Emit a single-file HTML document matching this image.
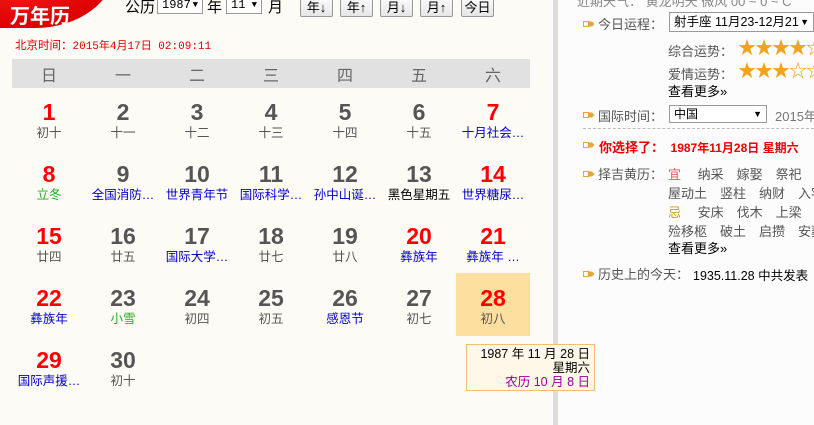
<!DOCTYPE html>
<html><head><meta charset="utf-8">
<style>
*{margin:0;padding:0;box-sizing:border-box}
body{width:814px;height:425px;overflow:hidden;background:#fdfbf6;font-family:"Liberation Sans","Noto Sans CJK SC",sans-serif;position:relative}
.abs{position:absolute;white-space:nowrap}
#logo{position:absolute;left:-40px;top:-60px;width:155px;height:88px;border-radius:0 0 80px 40px/0 0 60px 40px;background:radial-gradient(ellipse at 40% 40%,#f22 0%,#d00 70%,#b00 100%)}
.logot{position:absolute;color:#fff;font-size:20px;font-weight:bold;font-family:"Noto Sans CJK SC",sans-serif}
.sel{position:absolute;height:17px;border:1px solid #999;background:#fff;font-size:12px;font-family:"Liberation Mono",monospace;padding-left:4px;line-height:15px}
.sel b{position:absolute;right:4px;top:0;font-size:9px}
.btn{position:absolute;top:-3px;height:20px;border:1px solid #999;background:linear-gradient(#fbfbfb,#e6e6e6);font-size:13px;text-align:center;line-height:19px;border-radius:2px}
.hdr{position:absolute;left:12px;top:59px;width:518px;height:29px;background:#e1e1e1}
.hdr span{position:absolute;top:3px;width:74px;text-align:center;font-size:16px;color:#666}
.c{position:absolute;width:74px;text-align:center}
.n{font-size:23px;font-weight:bold;color:#555;line-height:26px;font-family:"Liberation Sans",sans-serif}
.r{color:#f00}
.l{font-size:12.5px;color:#555;line-height:16px;margin-top:0px}
.b{color:#00c}.g{color:#2a2}.k{color:#000}
#div{position:absolute;left:553px;top:0;width:5px;height:425px;background:#ddd}
#right{position:absolute;left:558px;top:0;width:256px;height:425px;background:#fcfcfc}
.ic{position:absolute;width:12px;height:8px}
.t{font-size:13px;color:#555}
.star{color:#f3a21b;font-size:18px;letter-spacing:-1px}
</style></head><body>
<div id="logo"><div class="logot" style="left:50px;top:60px">万年历</div></div>

<div class="abs" style="left:125px;top:-4px;font-size:15px">公历</div>
<div class="sel" style="left:157px;top:-3px;width:46px">1987<b>▼</b></div>
<div class="abs" style="left:207px;top:-4px;font-size:15px">年</div>
<div class="sel" style="left:226px;top:-3px;width:36px">11<b>▼</b></div>
<div class="abs" style="left:268px;top:-4px;font-size:15px">月</div>
<div class="btn" style="left:300px;width:33px">年↓</div>
<div class="btn" style="left:340px;width:33px">年↑</div>
<div class="btn" style="left:380px;width:33px">月↓</div>
<div class="btn" style="left:420px;width:33px">月↑</div>
<div class="btn" style="left:461px;width:33px">今日</div>

<div class="abs" style="left:15px;top:37px;font-size:11.5px;color:#d00">北京时间：<span style="font-family:'Liberation Mono',monospace;font-size:11px">2015年4月17日 02:09:11</span></div>

<div class="hdr">
<span style="left:0">日</span><span style="left:74px">一</span><span style="left:148px">二</span><span style="left:222px">三</span><span style="left:296px">四</span><span style="left:370px">五</span><span style="left:444px">六</span>
</div>

<div style="position:absolute;left:456px;top:273px;width:74px;height:63px;background:#fde0a0"></div>

<div class="c" style="left:12px;top:99px"><div class="n r">1</div><div class="l">初十</div></div>
<div class="c" style="left:86px;top:99px"><div class="n">2</div><div class="l">十一</div></div>
<div class="c" style="left:160px;top:99px"><div class="n">3</div><div class="l">十二</div></div>
<div class="c" style="left:234px;top:99px"><div class="n">4</div><div class="l">十三</div></div>
<div class="c" style="left:308px;top:99px"><div class="n">5</div><div class="l">十四</div></div>
<div class="c" style="left:382px;top:99px"><div class="n">6</div><div class="l">十五</div></div>
<div class="c" style="left:456px;top:99px"><div class="n r">7</div><div class="l b">十月社会…</div></div>
<div class="c" style="left:12px;top:161px"><div class="n r">8</div><div class="l g">立冬</div></div>
<div class="c" style="left:86px;top:161px"><div class="n">9</div><div class="l b">全国消防…</div></div>
<div class="c" style="left:160px;top:161px"><div class="n">10</div><div class="l b">世界青年节</div></div>
<div class="c" style="left:234px;top:161px"><div class="n">11</div><div class="l b">国际科学…</div></div>
<div class="c" style="left:308px;top:161px"><div class="n">12</div><div class="l b">孙中山诞…</div></div>
<div class="c" style="left:382px;top:161px"><div class="n">13</div><div class="l k">黑色星期五</div></div>
<div class="c" style="left:456px;top:161px"><div class="n r">14</div><div class="l b">世界糖尿…</div></div>
<div class="c" style="left:12px;top:223px"><div class="n r">15</div><div class="l">廿四</div></div>
<div class="c" style="left:86px;top:223px"><div class="n">16</div><div class="l">廿五</div></div>
<div class="c" style="left:160px;top:223px"><div class="n">17</div><div class="l b">国际大学…</div></div>
<div class="c" style="left:234px;top:223px"><div class="n">18</div><div class="l">廿七</div></div>
<div class="c" style="left:308px;top:223px"><div class="n">19</div><div class="l">廿八</div></div>
<div class="c" style="left:382px;top:223px"><div class="n r">20</div><div class="l b">彝族年</div></div>
<div class="c" style="left:456px;top:223px"><div class="n r">21</div><div class="l b">彝族年 …</div></div>
<div class="c" style="left:12px;top:285px"><div class="n r">22</div><div class="l b">彝族年</div></div>
<div class="c" style="left:86px;top:285px"><div class="n">23</div><div class="l g">小雪</div></div>
<div class="c" style="left:160px;top:285px"><div class="n">24</div><div class="l">初四</div></div>
<div class="c" style="left:234px;top:285px"><div class="n">25</div><div class="l">初五</div></div>
<div class="c" style="left:308px;top:285px"><div class="n">26</div><div class="l b">感恩节</div></div>
<div class="c" style="left:382px;top:285px"><div class="n">27</div><div class="l">初七</div></div>
<div class="c" style="left:456px;top:285px"><div class="n r">28</div><div class="l">初八</div></div>
<div class="c" style="left:12px;top:347px"><div class="n r">29</div><div class="l b">国际声援…</div></div>
<div class="c" style="left:86px;top:347px"><div class="n">30</div><div class="l">初十</div></div>

<div id="div"></div>
<div id="right">
<div class="abs t" style="left:19px;top:-9px;color:#888">近期天气： 黄龙明天 微风 00 ~ 0 ~ C</div>
<svg class="ic" style="left:25px;top:20px" viewBox="0 0 12 8"><rect x="0.5" y="1.5" width="5" height="5" fill="none" stroke="#e8a33a"/><path d="M6 1.5h3l2.5 2.5L9 6.5H6z" fill="#e8a33a"/></svg>
<div class="abs t" style="left:40px;top:14px">今日运程：</div>
<div class="sel" style="left:111px;top:12px;width:145px;height:20px;line-height:18px;font-family:'Liberation Sans','Noto Sans CJK SC',sans-serif;font-size:12.5px">射手座 11月23-12月21<b style="line-height:18px">▼</b></div>
<div class="abs t" style="left:110px;top:41px">综合运势：</div>
<div class="abs star" style="left:180px;top:34px">★★★★☆</div>
<div class="abs t" style="left:110px;top:64px">爱情运势：</div>
<div class="abs star" style="left:180px;top:57px">★★★☆☆</div>
<div class="abs" style="left:110px;top:81px;font-size:13px;color:#000">查看更多»</div>
<svg class="ic" style="left:25px;top:111px" viewBox="0 0 12 8"><rect x="0.5" y="1.5" width="5" height="5" fill="none" stroke="#e8a33a"/><path d="M6 1.5h3l2.5 2.5L9 6.5H6z" fill="#e8a33a"/></svg>
<div class="abs t" style="left:40px;top:106px">国际时间：</div>
<div class="sel" style="left:111px;top:105px;width:98px;height:18px;line-height:16px;font-family:'Liberation Sans','Noto Sans CJK SC',sans-serif">中国<b style="line-height:16px">▼</b></div>
<div class="abs t" style="left:217px;top:106px;color:#777">2015年4</div>
<div style="position:absolute;left:25px;top:128px;width:231px;border-top:1px dashed #bbb"></div>
<svg class="ic" style="left:25px;top:141px" viewBox="0 0 12 8"><rect x="0.5" y="1.5" width="5" height="5" fill="none" stroke="#e8a33a"/><path d="M6 1.5h3l2.5 2.5L9 6.5H6z" fill="#e8a33a"/></svg>
<div class="abs" style="left:41px;top:137px;font-size:13px;color:#e00;font-weight:bold">你选择了：　<span style="font-size:12px">1987年11月28日 星期六</span></div>
<svg class="ic" style="left:25px;top:170px" viewBox="0 0 12 8"><rect x="0.5" y="1.5" width="5" height="5" fill="none" stroke="#e8a33a"/><path d="M6 1.5h3l2.5 2.5L9 6.5H6z" fill="#e8a33a"/></svg>
<div class="abs t" style="left:40px;top:164px">择吉黄历：</div>
<div class="abs t" style="left:110px;top:164px"><span style="color:#e55">宜</span>　 纳采　嫁娶　祭祀　移</div>
<div class="abs t" style="left:110px;top:183px">屋动土　竖柱　纳财　入宅</div>
<div class="abs t" style="left:110px;top:202px"><span style="color:#cc9a20">忌</span>　 安床　伐木　上梁　纳</div>
<div class="abs t" style="left:110px;top:221px">殓移柩　破土　启攒　安葬</div>
<div class="abs" style="left:110px;top:238px;font-size:13px;color:#000">查看更多»</div>
<svg class="ic" style="left:25px;top:270px" viewBox="0 0 12 8"><rect x="0.5" y="1.5" width="5" height="5" fill="none" stroke="#e8a33a"/><path d="M6 1.5h3l2.5 2.5L9 6.5H6z" fill="#e8a33a"/></svg>
<div class="abs t" style="left:40px;top:264px">历史上的今天：</div>
<div class="abs" style="left:135px;top:265px;font-size:12.5px;color:#000">1935.11.28 中共发表《</div>
</div>

<div style="position:absolute;z-index:5;left:466px;top:344px;width:129px;height:47px;border:1px solid #f0c070;background:#fff8e8;text-align:right;padding:2px 4px 0 0;font-size:12.5px;line-height:14px">
<div>1987 年 11 月 28 日</div><div>星期六</div><div style="color:#909">农历 10 月 8 日</div></div>
</body></html>
